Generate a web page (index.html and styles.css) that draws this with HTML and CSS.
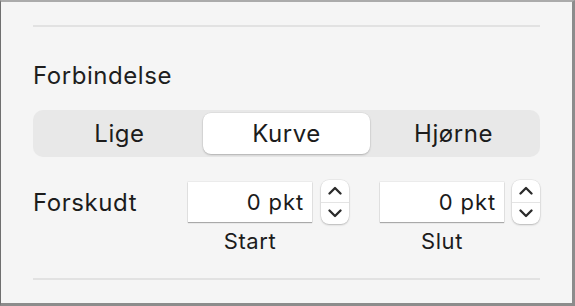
FILE: index.html
```html
<!DOCTYPE html>
<html lang="da">

<head>
    <meta charset="UTF-8">
    <meta name="viewport" content="width=device-width, initial-scale=1.0">
    <title>Forbindelse</title>
    <link rel="stylesheet" href="styles.css">
</head>

<body>
    <div class="panel">
        <hr class="rule">

        <h2 class="title">Forbindelse</h2>

        <!-- Connection type -->
        <div class="segmented">
            <div class="seg">Lige</div>
            <div class="seg active">Kurve</div>
            <div class="seg">Hjørne</div>
        </div>

        <!-- Offset -->
        <div class="offset-row">
            <div class="row-label">Forskudt</div>

            <div class="field">
                <div class="field-top">
                    <input class="num" type="text" value="0 pkt">
                    <div class="stepper">
                        <div class="step">
                            <svg width="14" height="9" viewBox="0 0 14 9"><polyline points="1.5,7.5 7,2 12.5,7.5" /></svg>
                        </div>
                        <div class="step step-down">
                            <svg width="14" height="9" viewBox="0 0 14 9"><polyline points="1.5,1.5 7,7 12.5,1.5" /></svg>
                        </div>
                    </div>
                </div>
                <div class="caption">Start</div>
            </div>

            <div class="field field-end">
                <div class="field-top">
                    <input class="num" type="text" value="0 pkt">
                    <div class="stepper">
                        <div class="step">
                            <svg width="14" height="9" viewBox="0 0 14 9"><polyline points="1.5,7.5 7,2 12.5,7.5" /></svg>
                        </div>
                        <div class="step step-down">
                            <svg width="14" height="9" viewBox="0 0 14 9"><polyline points="1.5,1.5 7,7 12.5,1.5" /></svg>
                        </div>
                    </div>
                </div>
                <div class="caption">Slut</div>
            </div>
        </div>

        <hr class="rule rule-bottom">
    </div>
</body>

</html>
```

FILE: styles.css
```css
body {
    margin: 0;
    font-family: Inter, "Noto Sans", sans-serif;
    letter-spacing: 0.035em;
    color: #1c1c1c;
}

.panel {
    box-sizing: border-box;
    width: 575px;
    height: 306px;
    background-color: #f5f5f5;
    border-top: 2px solid #ababab;
    border-left: 1px solid #6f6f6f;
    border-right: 3px solid #8c8c8c;
    border-bottom: 3px solid #8c8c8c;
    padding: 23px 32px 0 32px;
}

.rule {
    margin: 0;
    height: 2px;
    border: none;
    background-color: #e2e2e2;
}

.rule-bottom {
    margin-top: 24px;
}

.title {
    margin: 35px 0 0 0;
    font-size: 24px;
    line-height: 28px;
    font-weight: 400;
    color: #1e1e1e;
}

.segmented {
    display: flex;
    margin-top: 20px;
    height: 47px;
    box-sizing: border-box;
    padding: 3px;
    background-color: #e8e8e8;
    border-radius: 10px;
}

.seg {
    flex: 1;
    display: flex;
    align-items: center;
    justify-content: center;
    font-size: 24px;
    border-radius: 8px;
}

.seg.active {
    background-color: white;
    box-shadow: 0 1px 2px rgba(0, 0, 0, 0.22), 0 0 0 0.5px rgba(0, 0, 0, 0.06);
}

.offset-row {
    display: flex;
    margin-top: 23px;
}

.row-label {
    flex-shrink: 0;
    width: 155px;
    font-size: 24px;
    line-height: 44px;
    padding-top: 1px;
}

.field {
    flex-shrink: 0;
    display: flex;
    flex-direction: column;
}

.field-end {
    margin-left: 31px;
}

.field-top {
    display: flex;
    align-items: center;
    gap: 9px;
    height: 44px;
}

.field-end .field-top {
    gap: 8px;
}

.num {
    box-sizing: border-box;
    width: 124px;
    height: 40px;
    padding: 0 8px 0 0;
    border: none;
    outline: none;
    background: white;
    text-align: right;
    font-family: inherit;
    font-size: 22px;
    letter-spacing: 0.04em;
    color: #1a1a1a;
    box-shadow: 0 1px 1px rgba(0, 0, 0, 0.28), 0 0 0 0.5px rgba(0, 0, 0, 0.08);
}

.stepper {
    display: flex;
    flex-direction: column;
    width: 28px;
    height: 44px;
    background: white;
    border-radius: 8px;
    box-shadow: 0 1px 2px rgba(0, 0, 0, 0.22), 0 0 0 0.5px rgba(0, 0, 0, 0.08);
}

.step {
    flex: 1;
    display: flex;
    align-items: center;
    justify-content: center;
}

.step-down {
    border-top: 1px solid #e4e4e4;
}

.step svg polyline {
    fill: none;
    stroke: #2a2a2a;
    stroke-width: 2.3;
    stroke-linecap: round;
    stroke-linejoin: round;
}

.caption {
    margin-top: 4px;
    width: 124px;
    text-align: center;
    font-size: 22px;
    line-height: 26px;
}
```
